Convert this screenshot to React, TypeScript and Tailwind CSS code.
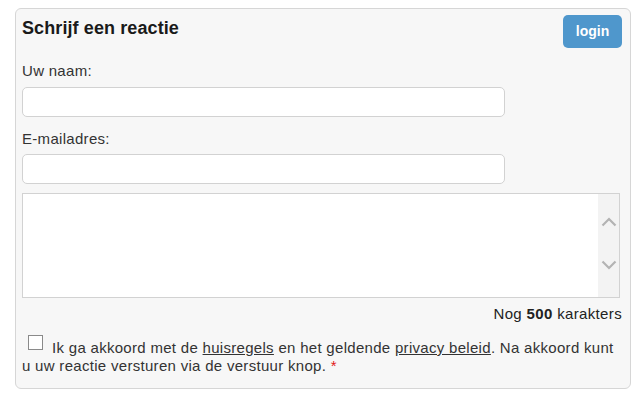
import React from "react";

export default function App() {
  return (
    <div className="w-[640px] h-[406px] bg-white pt-[8px] pl-[15px]" style={{ fontFamily: '"Liberation Sans", Arial, sans-serif' }}>
      <div className="w-[616px] h-[381px] border border-[#d6d6d6] rounded-[6px] bg-[#f7f7f7] pl-[6px] pr-[8px] text-[#333] text-[15px]">
        <div className="flex justify-between items-start">
          <h2 className="mt-[9px] leading-[21px] text-[18px] font-bold text-[#1a1a1a] tracking-[0.1px]">Schrijf een reactie</h2>
          <button className="mt-[6px] h-[33px] w-[59px] rounded-[5px] bg-[#4f97cc] text-white font-bold text-[14px] leading-[33px]">login</button>
        </div>
        <div className="mt-[14px] leading-[17px] tracking-[0.3px]">Uw naam:</div>
        <div className="mt-[8px] h-[30px] w-[483px] rounded-[5px] border border-[#d2d2d2] bg-white" />
        <div className="mt-[13px] leading-[17px] tracking-[0.3px]">E-mailadres:</div>
        <div className="mt-[7px] h-[30px] w-[483px] rounded-[5px] border border-[#d2d2d2] bg-white" />
        <div className="mt-[9px] h-[105px] w-[598px] border border-[#d2d2d2] bg-white flex justify-end">
          <div className="w-[21px] h-full bg-[#f3f3f3] flex flex-col items-center pt-[23px]">
            <svg width="16" height="10" viewBox="0 0 16 10" fill="none">
              <path d="M1.5 8.5 L8 2 L14.5 8.5" stroke="#b3b3b3" strokeWidth="2.2" />
            </svg>
            <svg className="mt-[33px]" width="16" height="10" viewBox="0 0 16 10" fill="none">
              <path d="M1.5 1.5 L8 8 L14.5 1.5" stroke="#b3b3b3" strokeWidth="2.2" />
            </svg>
          </div>
        </div>
        <div className="mt-[7px] leading-[17px] text-right text-[#222] tracking-[0.35px]">
          Nog <b>500</b> karakters
        </div>
        <p className="mt-[13px] leading-[18px] text-[#333] tracking-[0.3px]">
          <span className="inline-block w-[15px] h-[15px] border border-[#8a8a8a] bg-white ml-[6px] mr-[9px] align-[3px]" />
          Ik ga akkoord met de <a className="underline">huisregels</a> en het geldende <a className="underline">privacy beleid</a>. Na akkoord kunt u uw reactie versturen via de verstuur knop. <span className="text-[#e21b1b]">*</span>
        </p>
      </div>
    </div>
  );
}
